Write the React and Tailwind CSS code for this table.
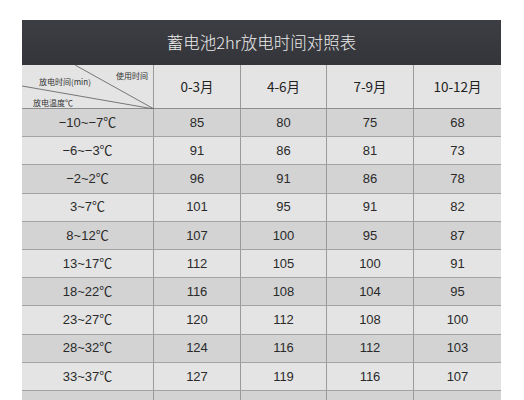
import React from 'react';

const columns = ['0-3月', '4-6月', '7-9月', '10-12月'];

// temperature range and minutes for each usage period
const rows = [
  { temp: '−10~−7℃', values: [85, 80, 75, 68] },
  { temp: '−6~−3℃', values: [91, 86, 81, 73] },
  { temp: '−2~2℃', values: [96, 91, 86, 78] },
  { temp: '3~7℃', values: [101, 95, 91, 82] },
  { temp: '8~12℃', values: [107, 100, 95, 87] },
  { temp: '13~17℃', values: [112, 105, 100, 91] },
  { temp: '18~22℃', values: [116, 108, 104, 95] },
  { temp: '23~27℃', values: [120, 112, 108, 100] },
  { temp: '28~32℃', values: [124, 116, 112, 103] },
  { temp: '33~37℃', values: [127, 119, 116, 107] },
];

const grid = 'grid grid-cols-[132px_87px_86px_87px_87px]';

const App = () => {
  return (
    <div className="w-[524px] h-[400px] overflow-hidden bg-white pt-[20px] pl-[22px]" style={{ fontFamily: '"Noto Sans CJK SC", "Noto Sans", sans-serif' }}>
      <div className="w-[479px]">
        {/* Title bar */}
        <div className="h-[45px] flex items-center justify-center bg-gradient-to-b from-[#3d3e43] to-[#34353a] text-[#ececec] text-[16.5px] font-light">
          蓄电池2hr放电时间对照表
        </div>

        {/* Column header row */}
        <div className={`${grid} h-[44px] bg-[#e4e4e4] border-b border-[#8e8e8e]`}>
          <div className="relative border-r border-[#9a9a9a] text-[8px] leading-none text-[#333]">
            <svg className="absolute inset-0" width="132" height="44" viewBox="0 0 132 44">
              <line x1="53" y1="0" x2="132" y2="44" stroke="#6a6a6a" strokeWidth="0.9" />
              <line x1="0" y1="21" x2="132" y2="44" stroke="#6a6a6a" strokeWidth="0.9" />
            </svg>
            <span className="absolute left-[94px] top-[7px]">使用时间</span>
            <span className="absolute left-[17px] top-[13px]">放电时间(min)</span>
            <span className="absolute left-[11px] top-[34px]">放电温度℃</span>
          </div>
          {columns.map((col, i) => (
            <div key={col} className={`flex items-center justify-center text-[13.5px] text-[#222] ${i < 3 ? 'border-r border-[#9a9a9a]' : ''}`}>
              {col}
            </div>
          ))}
        </div>

        {/* Data rows */}
        {rows.map((row, r) => (
          <div
            key={row.temp}
            className={`${grid} h-[28.2px] border-b border-[#a3a3a3] text-[13px] text-[#2a2a2a] ${r % 2 === 0 ? 'bg-[#d3d3d3]' : 'bg-[#e4e4e4]'}`}
            style={{ fontFamily: '"Liberation Sans", Arial, "Noto Sans CJK SC", sans-serif' }}
          >
            <div className="flex items-center justify-center border-r border-[#9a9a9a]">{row.temp}</div>
            {row.values.map((v, i) => (
              <div key={i} className={`flex items-center justify-center ${i < 3 ? 'border-r border-[#9a9a9a]' : ''}`}>
                {v}
              </div>
            ))}
          </div>
        ))}

        {/* next row, cut off by the bottom edge */}
        <div className={`${grid} h-[28.2px] bg-[#d3d3d3]`}>
          <div className="border-r border-[#9a9a9a]" />
          <div className="border-r border-[#9a9a9a]" />
          <div className="border-r border-[#9a9a9a]" />
          <div className="border-r border-[#9a9a9a]" />
          <div />
        </div>
      </div>
    </div>
  );
};

export default App;
